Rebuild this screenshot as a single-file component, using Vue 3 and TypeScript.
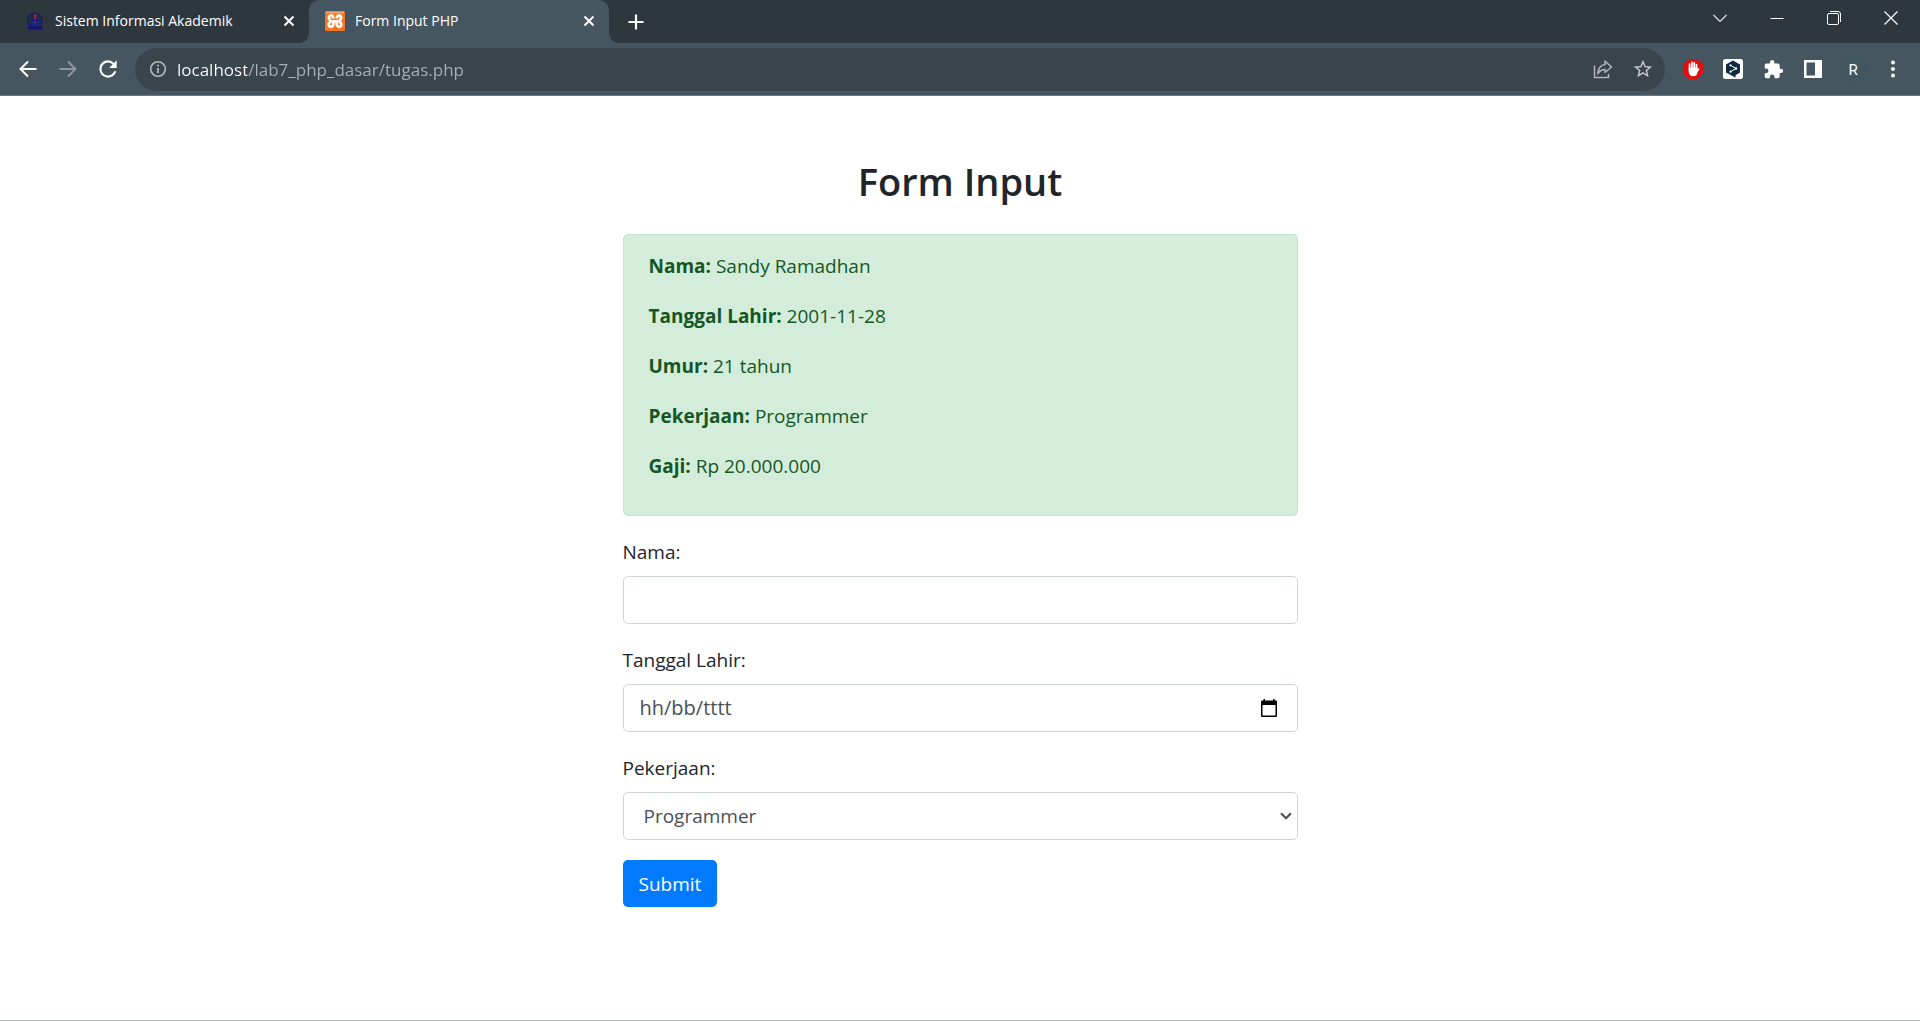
<script setup lang="ts">
import { ref } from 'vue'

interface Detail {
  label: string
  value: string
}

const details: Detail[] = [
  { label: 'Nama:', value: 'Sandy Ramadhan' },
  { label: 'Tanggal Lahir:', value: '2001-11-28' },
  { label: 'Umur:', value: '21 tahun' },
  { label: 'Pekerjaan:', value: 'Programmer' },
  { label: 'Gaji:', value: 'Rp 20.000.000' },
]

const jobs: string[] = ['Programmer', 'Designer', 'Manager']

const name = ref('')
const birthDate = ref('')
const job = ref('Programmer')
const address = ref('localhost/lab7_php_dasar/tugas.php')
</script>

<template>
  <div class="window">
    <header class="chrome">
      <div class="tab-strip">
        <div class="tab">
          <svg class="favicon" width="20" height="20" viewBox="0 0 20 20" aria-hidden="true">
            <circle cx="10" cy="9.500" r="7.500" fill="#1f2a50" stroke="#16166e" stroke-width="1" />
            <path d="M3 15.500h14.500v3H2.500z" fill="#10107a" />
            <path d="M10 7l4.500 3.500-1.500 3.500H7l-1.500-3.500z" fill="#18189a" />
            <path d="M6.500 11.500h7M10 8v6" stroke="#38406a" stroke-width="1" />
            <path d="M9 7.500V4l1-1.500L11.300 4v3.500z" fill="#b32626" />
          </svg>
          <span class="tab-title">Sistem Informasi Akademik</span>
          <button class="tab-close" type="button" aria-label="Close tab">
            <svg width="12" height="12" viewBox="0 0 12 12"><path d="M1.500 1.500l9 9M10.500 1.500l-9 9" stroke="#fff" stroke-width="2" /></svg>
          </button>
        </div>
        <div class="tab active">
          <svg class="favicon" width="20" height="20" viewBox="0 0 20 20" aria-hidden="true">
            <rect width="20" height="20" rx="1.500" fill="#f37623" />
            <path d="M1 1.500h18" stroke="#f9a56d" stroke-width="1.500" />
            <path d="M8.200 7.500V6.700A2.200 2.200 0 1 0 4.600 8.400L5.600 10 4.600 11.600A2.300 2.300 0 1 0 8.200 13.500V10.300h3.600v3.200A2.300 2.300 0 1 0 15.400 11.600L14.400 10l1-1.600A2.200 2.200 0 1 0 11.800 6.700v.8" fill="none" stroke="#fff" stroke-width="2.700" stroke-linejoin="round" />
          </svg>
          <span class="tab-title">Form Input PHP</span>
          <button class="tab-close" type="button" aria-label="Close tab">
            <svg width="12" height="12" viewBox="0 0 12 12"><path d="M1.500 1.500l9 9M10.500 1.500l-9 9" stroke="#fff" stroke-width="2" /></svg>
          </button>
        </div>
        <button class="new-tab" type="button" aria-label="New tab">
          <svg width="16" height="16" viewBox="0 0 16 16"><path d="M8 .5v15M.5 8h15" stroke="#fff" stroke-width="2.200" /></svg>
        </button>
        <div class="window-controls">
          <button type="button" aria-label="Search tabs">
            <svg width="14" height="14" viewBox="0 0 14 14"><path d="M.5 4L7 10.500 13.500 4" fill="none" stroke="#e4e6e7" stroke-width="1.200" /></svg>
          </button>
          <button type="button" aria-label="Minimize">
            <svg width="14" height="14" viewBox="0 0 14 14"><path d="M.5 7.500h13" stroke="#fff" stroke-width="1" /></svg>
          </button>
          <button type="button" aria-label="Restore">
            <svg width="14" height="14" viewBox="0 0 14 14"><g fill="none" stroke="#fff" stroke-width="1"><rect x=".5" y="2.500" width="11" height="11" rx="1.500" /><path d="M3 .5h8a2.500 2.500 0 0 1 2.500 2.500v8" /></g></svg>
          </button>
          <button type="button" aria-label="Close">
            <svg width="14" height="14" viewBox="0 0 14 14"><path d="M.5.5l13 13M13.500.5l-13 13" stroke="#fff" stroke-width="1.200" /></svg>
          </button>
        </div>
      </div>

      <div class="toolbar">
        <button class="tool" type="button" aria-label="Back">
          <svg width="20" height="20" viewBox="0 0 20 20"><path d="M18.500 10H3M10 2.500L2.500 10l7.500 7.500" fill="none" stroke="#fff" stroke-width="2" /></svg>
        </button>
        <button class="tool" type="button" aria-label="Forward">
          <svg width="20" height="20" viewBox="0 0 20 20"><path d="M1.500 10H17M10 2.500l7.500 7.500-7.500 7.500" fill="none" stroke="#8c969c" stroke-width="2" /></svg>
        </button>
        <button class="tool" type="button" aria-label="Reload">
          <svg width="26" height="26" viewBox="0 0 24 24"><path d="M17.650 6.350A7.960 7.960 0 0 0 12 4a8 8 0 1 0 7.730 10h-2.080A6 6 0 1 1 12 6c1.660 0 3.140.69 4.220 1.780L13 11h7V4z" fill="#fff" /></svg>
        </button>
        <div class="omnibox">
          <svg width="18" height="18" viewBox="0 0 18 18" aria-hidden="true"><circle cx="9" cy="9" r="7.300" fill="none" stroke="#b4babd" stroke-width="1.600" /><path d="M9 8v5M9 4.800v1.800" stroke="#b4babd" stroke-width="1.800" /></svg>
          <input v-model="address" class="address" type="text" aria-label="Address" spellcheck="false" />
          <button class="tool" type="button" aria-label="Share">
            <svg width="20" height="20" viewBox="0 0 20 20"><g fill="none" stroke="#b0b6b9" stroke-width="1.500"><path d="M1.500 6.500v12h14V15" /><path d="M12 2l6.500 6-6.500 5.500V10.500C8.500 10.500 6.500 12 4.800 14.800 5.200 10 7.500 6 12 5.500z" stroke-linejoin="round" /></g></svg>
          </button>
          <button class="tool" type="button" aria-label="Bookmark">
            <svg width="22" height="22" viewBox="0 0 24 24"><path d="M22 9.240l-7.190-.62L12 2 9.190 8.630 2 9.240l5.460 4.730L5.820 21 12 17.270 18.180 21l-1.630-7.030zM12 15.400l-3.760 2.270 1-4.280-3.320-2.880 4.380-.38L12 6.100l1.710 4.040 4.380.38-3.320 2.880 1 4.280z" fill="#c3c8ca" /></svg>
          </button>
        </div>
        <button class="tool" type="button" aria-label="Ad blocker">
          <svg width="22" height="22" viewBox="0 0 22 22"><path d="M6.800 1h8.400L21 6.800v8.400L15.200 21H6.800L1 15.200V6.800z" fill="#e40d0d" /><path d="M7.600 12V6.200M9.900 10.500V4.400M12.200 10.500V4.800M14.500 12V6.600" stroke="#fff" stroke-width="1.800" stroke-linecap="round" /><path d="M6.700 9.500h8.700v4.500c0 2.500-1.300 4.300-3.900 4.300-2.900 0-4.800-1.900-4.800-4.500z" fill="#fff" /><path d="M14 14.500l2.600-3.300" stroke="#fff" stroke-width="1.600" stroke-linecap="round" /></svg>
        </button>
        <button class="tool" type="button" aria-label="Translator">
          <svg width="20" height="20" viewBox="0 0 20 20"><rect width="20" height="20" rx="2.500" fill="#fff" /><path d="M10 1.500l7 4v8l-4.500 2.700v2.600L9 16.700l-6-3.200v-8z" fill="#0f2b46" /><path d="M7.500 6.300l5.500 3.200-5.500 3.200" fill="none" stroke="#fff" stroke-width="1" /><g fill="#fff"><circle cx="7.500" cy="6.300" r="1.100" /><circle cx="13" cy="9.500" r="1.200" /><circle cx="7.500" cy="12.700" r="1.100" /></g></svg>
        </button>
        <button class="tool" type="button" aria-label="Extensions">
          <svg width="21" height="21" viewBox="0 0 24 24"><path d="M20.500 11H19V7c0-1.100-.9-2-2-2h-4V3.500a2.500 2.500 0 0 0-5 0V5H4c-1.100 0-1.990.9-1.990 2v3.800H3.500c1.490 0 2.700 1.210 2.700 2.700s-1.210 2.700-2.700 2.700H2V20c0 1.100.9 2 2 2h3.800v-1.500c0-1.490 1.210-2.700 2.700-2.700s2.700 1.210 2.700 2.700V22H17c1.100 0 2-.9 2-2v-4h1.500a2.500 2.500 0 0 0 0-5z" fill="#fff" /></svg>
        </button>
        <button class="tool" type="button" aria-label="Side panel">
          <svg width="18" height="18" viewBox="0 0 18 18"><path d="M0 0h18v18H0zM2.500 2.500v13H11v-13z" fill="#fff" fill-rule="evenodd" /></svg>
        </button>
        <button class="tool" type="button" aria-label="Profile">
          <span class="avatar">R</span>
        </button>
        <button class="tool" type="button" aria-label="Menu">
          <svg width="6" height="18" viewBox="0 0 6 18"><g fill="#fff"><circle cx="3" cy="2.500" r="2" /><circle cx="3" cy="9" r="2" /><circle cx="3" cy="15.500" r="2" /></g></svg>
        </button>
      </div>
    </header>

    <main class="page">
      <div class="column">
        <h2>Form Input</h2>

        <div class="alert" role="alert">
          <p v-for="item in details" :key="item.label">
            <strong>{{ item.label }}</strong> {{ item.value }}
          </p>
        </div>

        <form @submit.prevent>
          <div class="group">
            <label for="nama">Nama:</label>
            <input id="nama" v-model="name" class="control" type="text" />
          </div>
          <div class="group">
            <label for="tanggal">Tanggal Lahir:</label>
            <div class="control date">
              <input id="tanggal" v-model="birthDate" type="text" placeholder="hh/bb/tttt" />
              <button type="button" aria-label="Calendar">
                <svg width="16" height="18" viewBox="0 0 16 18"><path d="M2.500 0H4v1.500h8V0h1.500v1.500H15a1 1 0 0 1 1 1V17a1 1 0 0 1-1 1H1a1 1 0 0 1-1-1V2.500a1 1 0 0 1 1-1h1.500zM1.500 6v10.500h13V6z" fill="#000" fill-rule="evenodd" /></svg>
              </button>
            </div>
          </div>
          <div class="group">
            <label for="pekerjaan">Pekerjaan:</label>
            <div class="select-wrap">
              <select id="pekerjaan" v-model="job" class="control">
                <option v-for="option in jobs" :key="option" :value="option">{{ option }}</option>
              </select>
              <svg class="arrow" width="12" height="8" viewBox="0 0 12 8" aria-hidden="true"><path d="M1 1.200l5 5 5-5" fill="none" stroke="#495057" stroke-width="2.200" /></svg>
            </div>
          </div>
          <button class="submit" type="submit">Submit</button>
        </form>
      </div>
    </main>
  </div>
</template>

<style>
body {
  margin: 0;
}
</style>

<style scoped>
* {
  box-sizing: border-box;
}

.window {
  display: flex;
  flex-direction: column;
  min-height: 100vh;
  background: #fff;
  border-bottom: 1px solid #b4bcbc;
  font-family: "Open Sans", "Noto Sans", sans-serif;
}

button {
  padding: 0;
  border: 0;
  background: none;
  font: inherit;
  color: inherit;
}

svg {
  display: block;
  flex: none;
}

.chrome {
  border-bottom: 1px solid #6a7880;
  background: #455660;
  color: #fff;
}

.tab-strip {
  display: flex;
  height: 43px;
  padding-left: 9px;
  background: #2d373d;
}

.tab {
  position: relative;
  display: flex;
  align-items: center;
  width: 300px;
  padding: 0 14px 1px 16px;
  font-size: 14px;
}

.tab-title {
  flex: 1;
  margin-left: 10px;
  line-height: 20px;
  white-space: nowrap;
}

.tab.active {
  border-radius: 10px 10px 0 0;
  background: #455660;
}

.tab.active::before,
.tab.active::after {
  content: "";
  position: absolute;
  bottom: 0;
  width: 10px;
  height: 10px;
}

.tab.active::before {
  left: -10px;
  background: radial-gradient(circle at 0 0, #2d373d 10px, #455660 10px);
}

.tab.active::after {
  right: -10px;
  background: radial-gradient(circle at 100% 0, #2d373d 10px, #455660 10px);
}

.new-tab {
  display: flex;
  align-items: center;
  justify-content: center;
  width: 54px;
}

.window-controls {
  display: flex;
  height: 36px;
  margin-left: auto;
  padding-right: 1px;
}

.window-controls button {
  display: flex;
  align-items: center;
  justify-content: center;
  width: 57px;
}

.toolbar {
  display: flex;
  align-items: center;
  height: 52px;
  padding: 0 7px 0 8px;
}

.tool {
  display: flex;
  flex: none;
  align-items: center;
  justify-content: center;
  width: 40px;
  height: 40px;
}

.omnibox {
  display: flex;
  flex: 1;
  align-items: center;
  height: 43px;
  margin: 0 8px 0 7px;
  padding: 0 2px 0 14px;
  border-radius: 22px;
  background: #39444b;
}

.address {
  flex: 1;
  min-width: 0;
  margin-left: 10px;
  padding: 2px 0 0;
  border: 0;
  outline: 0;
  background: linear-gradient(to right, #fff 70px, #a9b0b4 70px);
  background-clip: text;
  color: transparent;
  font: inherit;
  font-size: 17px;
  line-height: 24px;
}

.avatar {
  width: 26px;
  height: 26px;
  border-radius: 50%;
  background: #405661;
  font-family: Roboto, sans-serif;
  font-size: 15px;
  line-height: 28px;
  text-align: center;
}

.page {
  flex: 1;
  padding: 60px 20px;
  color: #212529;
  font-size: 19px;
  line-height: 32px;
}

.column {
  max-width: 675px;
  margin: 0 auto;
}

h2 {
  margin: 0 0 28px;
  font-size: 38px;
  font-weight: 600;
  line-height: 50px;
  text-align: center;
}

.alert {
  margin-bottom: 20px;
  padding: 15px 25px;
  border: 1px solid #c3e6cb;
  border-radius: 5px;
  background: #d4edda;
  color: #155724;
}

.alert p {
  margin: 0 0 18px;
}

.group {
  margin-bottom: 20px;
}

label {
  display: block;
  margin-bottom: 8px;
}

.control {
  display: block;
  width: 100%;
  height: 48px;
  padding: 0 16px;
  border: 1px solid #ced4da;
  border-radius: 5px;
  background: #fff;
  color: #495057;
  font: inherit;
}

.date {
  display: flex;
  align-items: center;
  padding-right: 20px;
}

.date input {
  flex: 1;
  min-width: 0;
  padding: 0;
  border: 0;
  outline: 0;
  color: inherit;
  font: inherit;
  font-size: 20px;
}

.date input::placeholder {
  color: #495057;
}

.select-wrap {
  position: relative;
}

select.control {
  padding: 0 20px;
  appearance: none;
}

.arrow {
  position: absolute;
  top: 20px;
  right: 6px;
  pointer-events: none;
}

.submit {
  display: block;
  height: 47px;
  padding: 0 16px;
  border-radius: 5px;
  background: #007bff;
  color: #fff;
}
</style>
